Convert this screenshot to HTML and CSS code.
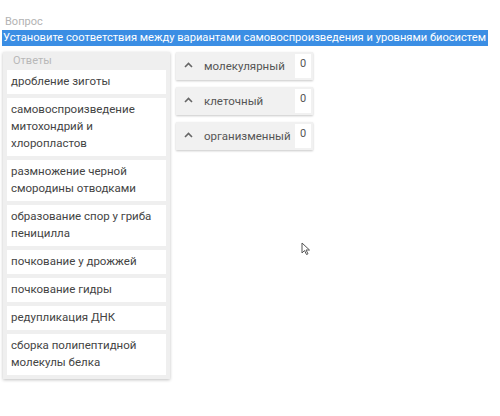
FILE: index.html
```
<!DOCTYPE html>
<html lang="ru">
<head>
<meta charset="utf-8">
<link rel="stylesheet" href="styles.css">
</head>
<body>
<div class="page">
  <div class="q-label">Вопрос</div>
  <div class="q-text"><span class="sel">Установите соответствия между вариантами самовоспроизведения и уровнями биосистем</span></div>
  <div class="board">
    <div class="answers">
      <div class="answers-title">Ответы</div>
      <div class="item">дробление зиготы</div>
      <div class="item">самовоспроизведение<br>митохондрий и<br>хлоропластов</div>
      <div class="item">размножение черной<br>смородины отводками</div>
      <div class="item">образование спор у гриба<br>пеницилла</div>
      <div class="item">почкование у дрожжей</div>
      <div class="item">почкование гидры</div>
      <div class="item">редупликация ДНК</div>
      <div class="item">сборка полипептидной<br>молекулы белка</div>
    </div>
    <div class="groups">
      <div class="group">
        <svg class="chev" width="9" height="6" viewBox="0 0 9 6"><path d="M1 5 L4.5 1.5 L8 5" fill="none" stroke="#666" stroke-width="1.6"/></svg>
        <span class="g-name">молекулярный</span>
        <span class="count">0</span>
      </div>
      <div class="group">
        <svg class="chev" width="9" height="6" viewBox="0 0 9 6"><path d="M1 5 L4.5 1.5 L8 5" fill="none" stroke="#666" stroke-width="1.6"/></svg>
        <span class="g-name">клеточный</span>
        <span class="count">0</span>
      </div>
      <div class="group">
        <svg class="chev" width="9" height="6" viewBox="0 0 9 6"><path d="M1 5 L4.5 1.5 L8 5" fill="none" stroke="#666" stroke-width="1.6"/></svg>
        <span class="g-name">организменный</span>
        <span class="count">0</span>
      </div>
    </div>
  </div>
  <svg class="cursor" width="10" height="14" viewBox="0 0 10 14"><path d="M1 1 L1 11 L3.5 8.5 L5.5 12.5 L7 11.8 L5 8 L8.5 8 Z" fill="#fff" stroke="#555" stroke-width="1"/></svg>
</div>
</body>
</html>
```
FILE: styles.css
```
html, body {
  margin: 0;
  padding: 0;
  background: #fff;
}
.page {
  position: relative;
  width: 500px;
  height: 416px;
  font-family: Roboto, "Noto Sans", sans-serif;
  color: #444;
}
.q-label {
  padding: 15px 0 0 5px;
  font-size: 11px;
  line-height: 14px;
  color: #b3b3b3;
}
.q-text {
  margin-top: 1px;
  padding-left: 2px;
  font-size: 11.15px;
  line-height: 16px;
  white-space: nowrap;
}
.sel {
  background: #3b8ee4;
  color: #fff;
  display: inline-block;
  padding: 0 2px 0 1px;
}
.board {
  display: flex;
  align-items: flex-start;
  gap: 4px;
  margin-top: 6px;
  padding-left: 3px;
}
.answers {
  width: 159px;
  background: #efefef;
  padding: 0 4px 4px 4px;
  box-shadow: 0 1px 3px rgba(0,0,0,0.25);
  display: flex;
  flex-direction: column;
  gap: 4px;
}
.answers-title {
  font-size: 11px;
  line-height: 12px;
  color: #b8b8b8;
  padding: 3px 0 0 6px;
  margin-bottom: -1px;
}
.item {
  background: #fff;
  font-size: 11.5px;
  line-height: 17px;
  padding: 3px 4px 4px 4px;
  color: #444;
}
.groups {
  display: flex;
  flex-direction: column;
  gap: 7px;
  padding-left: 2px;
}
.group {
  width: 137px;
  height: 28px;
  box-sizing: border-box;
  background: #f1f1f1;
  box-shadow: 0 1px 2px rgba(0,0,0,0.22);
  display: flex;
  align-items: center;
  padding: 0 2px 0 8px;
  font-size: 11.5px;
  color: #555;
}
.chev {
  margin-right: 11px;
  margin-top: -3px;
}
.g-name {
  flex: 1;
}
.count {
  background: #fff;
  width: 16px;
  height: 24px;
  font-size: 11px;
  line-height: 20px;
  text-align: center;
  color: #555;
}
.cursor {
  position: absolute;
  left: 301px;
  top: 242px;
}
```
